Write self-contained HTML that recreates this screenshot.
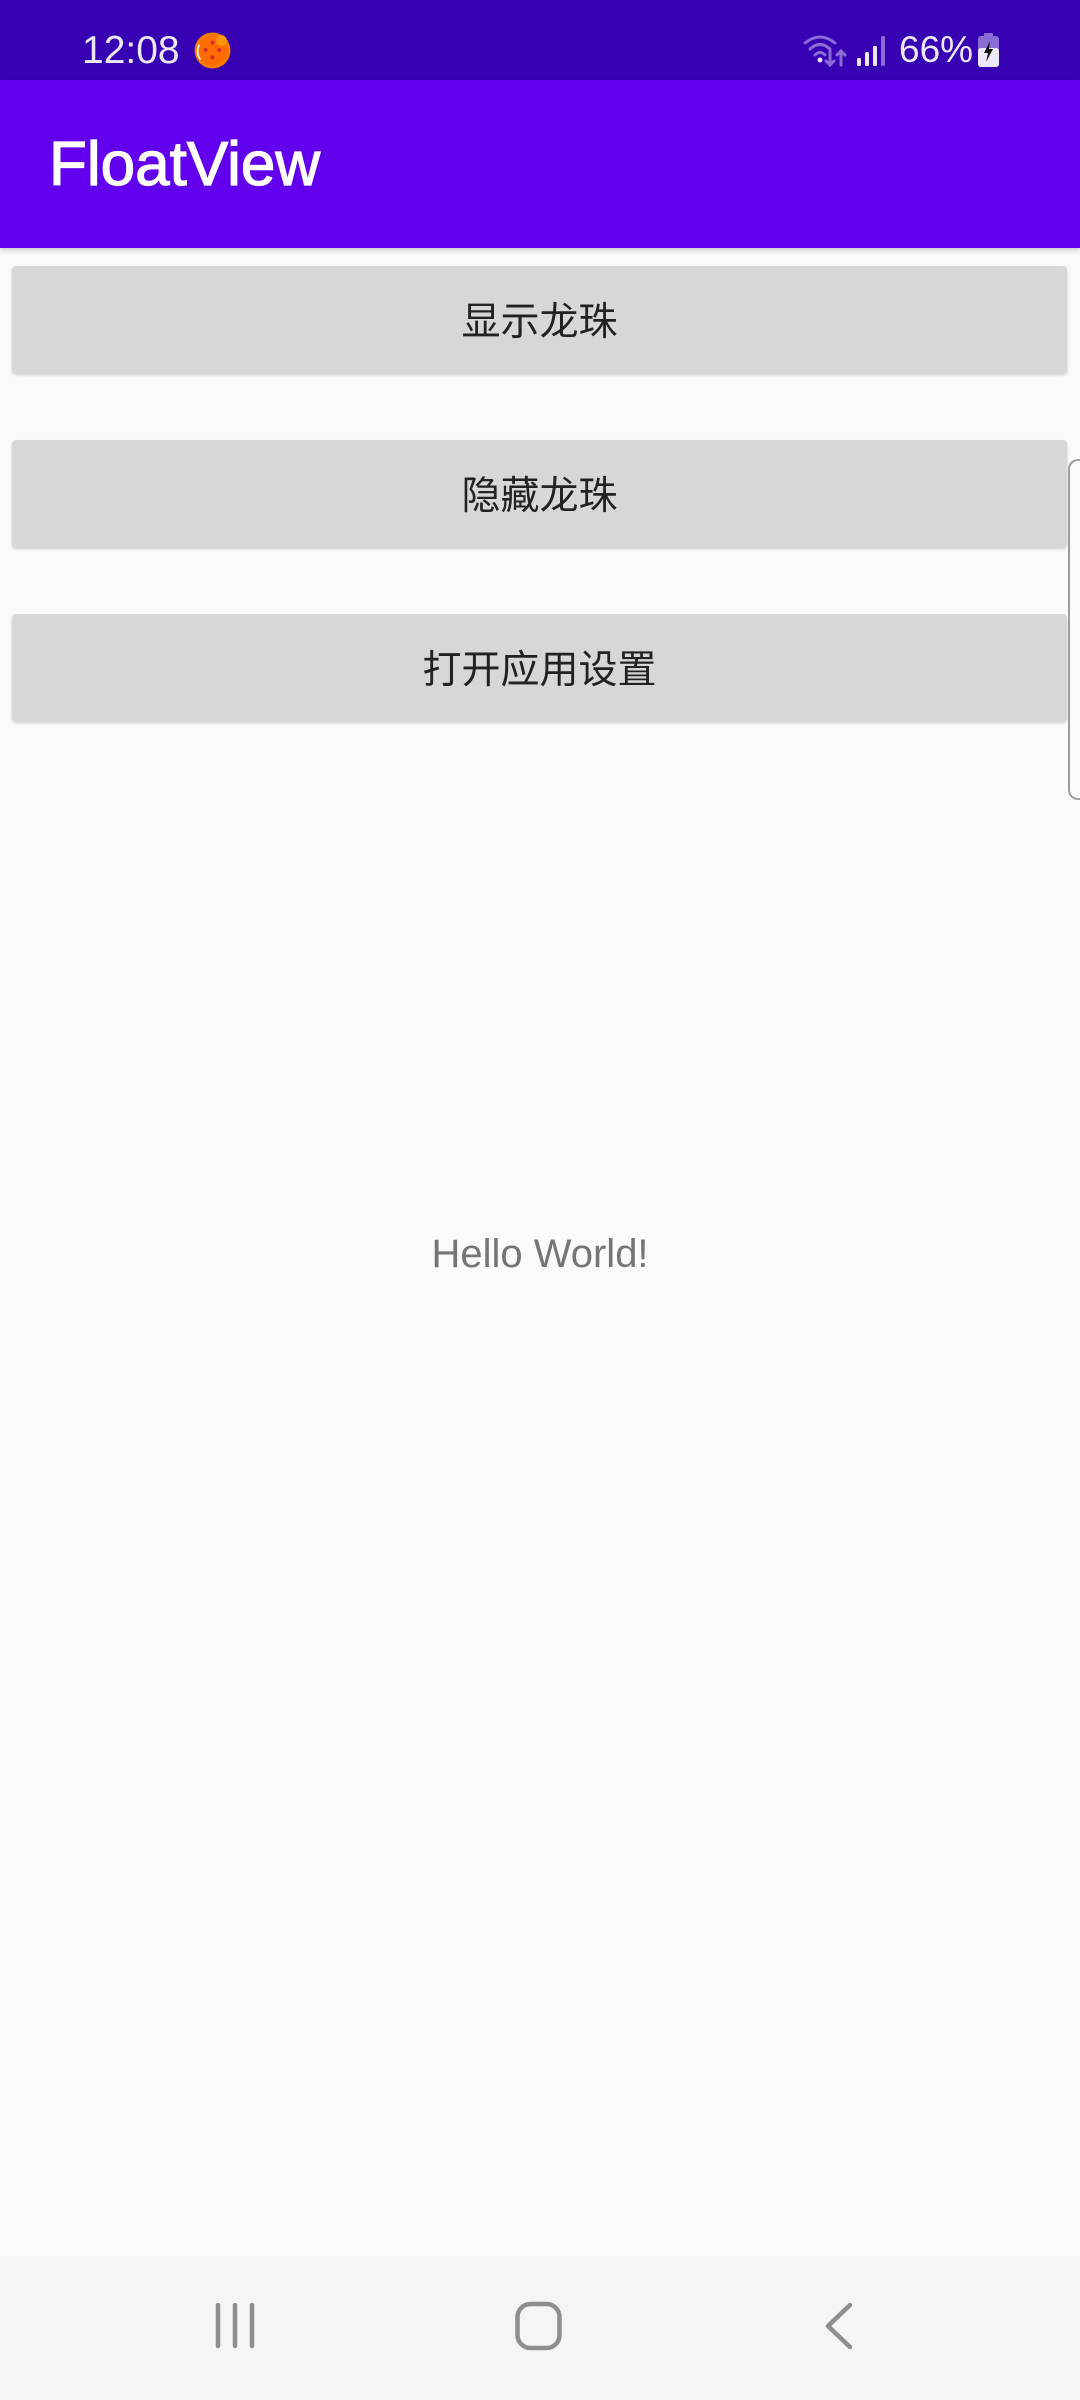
<!DOCTYPE html>
<html><head><meta charset="utf-8"><style>
*{margin:0;padding:0;box-sizing:border-box}
body{width:1080px;height:2400px;background:#fafafa;position:relative;overflow:hidden;font-family:"Liberation Sans","Noto Sans CJK SC",sans-serif}
.sb{position:absolute;left:0;top:0;width:1080px;height:80px;background:#3700b3}
.ab{position:absolute;left:0;top:80px;width:1080px;height:168px;background:#6200ee;box-shadow:0 2px 5px rgba(0,0,0,.2)}
.t{position:absolute;color:#fff}
.btn{position:absolute;left:12px;width:1055px;height:107px;background:#d6d7d7;border-radius:4px;box-shadow:0 2px 3px rgba(0,0,0,.18);color:#222;font-size:39px;text-align:center;line-height:107px;font-family:"Noto Sans CJK SC",sans-serif}
.nav{position:absolute;left:0;top:2256px;width:1080px;height:144px;background:#f5f5f5}
</style></head><body>
<div class="sb">
<div class="t" style="left:82px;top:28px;font-size:39px;color:#ece8f8;line-height:46px">12:08</div>
<svg style="position:absolute;left:194px;top:32px" width="37" height="37" viewBox="0 0 35 35"><circle cx="17.5" cy="17.5" r="17" fill="#f57c00"/><circle cx="17.5" cy="17.5" r="14" fill="#ff6d00"/><circle cx="26" cy="8" r="5" fill="#ff9800"/><path d="M5 12 A13 13 0 0 0 6 26" stroke="#fff" stroke-width="1.5" fill="none"/><g fill="#d32f2f"><circle cx="17.5" cy="10" r="2"/><circle cx="11" cy="17" r="2"/><circle cx="24" cy="17" r="2"/><circle cx="17.5" cy="24" r="2"/></g></svg>
<svg style="position:absolute;left:803px;top:33px" width="45" height="34" viewBox="0 0 45 34"><g stroke="#8b6cd6" stroke-width="3" fill="none" stroke-linecap="round"><path d="M2 10 Q17 -2 32 10"/><path d="M7 16 Q17 7 27 16"/><path d="M12 22 Q17 17 22 22"/><path d="M27 18 V32 M23 28 L27 32 L31 28"/><path d="M38 32 V18 M34 22 L38 18 L42 22"/></g><circle cx="17" cy="27" r="2.5" fill="#e6e0f5"/></svg>
<svg style="position:absolute;left:857px;top:36px" width="32" height="31" viewBox="0 0 32 31"><g fill="#ece8f8"><rect x="0" y="22" width="4" height="8" rx="1.5"/><rect x="8" y="16" width="4" height="14" rx="1.5"/><rect x="16" y="10" width="4" height="20" rx="1.5"/></g><rect x="24" y="0" width="4" height="30" rx="1.5" fill="#8b6cd6"/></svg>
<div class="t" style="left:899px;top:28px;font-size:37px;color:#ece8f8;line-height:44px">66%</div>
<svg style="position:absolute;left:978px;top:33px" width="21" height="34" viewBox="0 0 21 34"><rect x="6" y="0" width="9" height="4" rx="1" fill="#8b6cd6"/><rect x="0" y="3" width="21" height="31" rx="3" fill="#8b6cd6"/><rect x="0" y="15" width="21" height="19" rx="3" fill="#ece8f8"/><path d="M12 8 L6 20 H10 L8 29 L15 16 H11 Z" fill="#111"/></svg>
</div>
<div class="ab"><div class="t" style="left:49px;top:50px;font-size:62px;line-height:70px;-webkit-text-stroke:1.2px #fff">FloatView</div></div>
<div class="btn" style="top:266px">显示龙珠</div>
<div class="btn" style="top:440px">隐藏龙珠</div>
<div class="btn" style="top:614px">打开应用设置</div>
<div style="position:absolute;left:1068px;top:459px;width:20px;height:341px;border:2px solid #9e9e9e;border-right:none;border-radius:10px 0 0 10px"></div>
<div style="position:absolute;left:0;width:1080px;top:1229px;text-align:center;font-size:40px;color:#757575;line-height:50px">Hello World!</div>
<div class="nav">
<svg style="position:absolute;left:214px;top:47px" width="46" height="46" viewBox="0 0 46 46"><g stroke="#8e8e8e" stroke-width="4.5" stroke-linecap="round"><path d="M4 2V43M21 2V43M38 2V43"/></g></svg>
<svg style="position:absolute;left:513px;top:45px" width="52" height="50" viewBox="0 0 52 50"><rect x="4.5" y="3" width="42" height="44" rx="13" fill="none" stroke="#8e8e8e" stroke-width="4.5"/></svg>
<svg style="position:absolute;left:824px;top:47px" width="32" height="46" viewBox="0 0 32 46"><path d="M26 2 L4 23 L26 44" fill="none" stroke="#8e8e8e" stroke-width="4.5" stroke-linecap="round" stroke-linejoin="round"/></svg>
</div>
</body></html>
